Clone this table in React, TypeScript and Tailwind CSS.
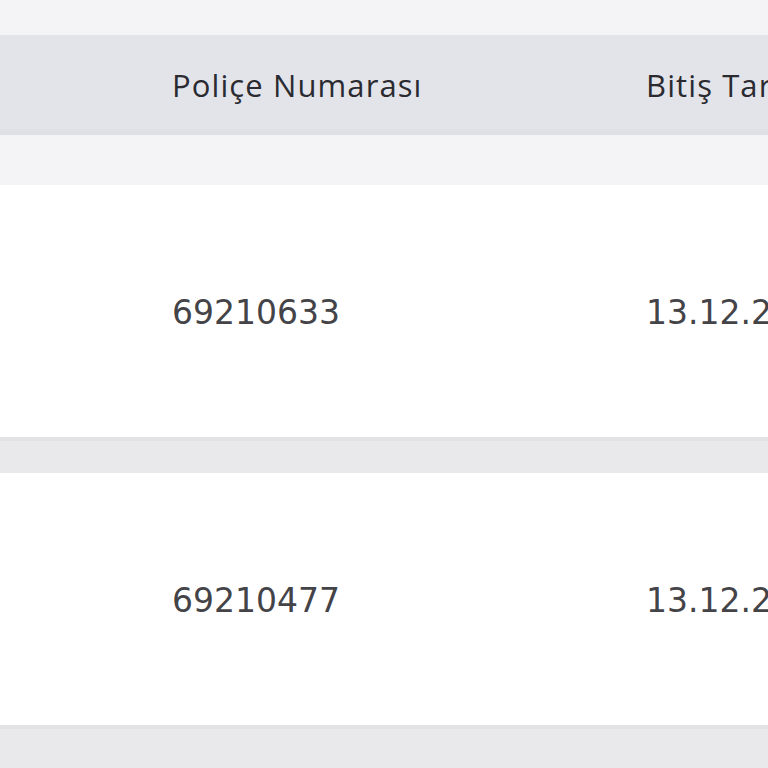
import React from "react";

const rows = [
  { police: "69210633", end: "13.12.2021" },
  { police: "69210477", end: "13.12.2021" },
];

const App: React.FC = () => {
  return (
    <div className="w-[768px] h-[768px] overflow-hidden bg-[#f4f4f7]">
      <div className="h-[35px]" />
      <div className="h-[100px] bg-[#e3e4ea] border-b-[6px] border-[#dfe0e6] flex items-center pt-[6px] whitespace-nowrap text-[#2a2a30] text-[31px] tracking-[1.1px] font-['Open_Sans',sans-serif]">
        <div className="w-[172px] shrink-0" />
        <div className="w-[474px] shrink-0">Poliçe Numarası</div>
        <div className="shrink-0">Bitiş Tarihi</div>
      </div>
      <div className="h-[50px]" />
      {rows.map((row, i) => (
        <div key={row.police}>
          <div className="h-[252px] bg-white flex items-center pt-[4px] whitespace-nowrap text-[#444448] text-[33px] font-['DejaVu_Sans',sans-serif]">
            <div className="w-[172px] shrink-0" />
            <div className="w-[474px] shrink-0">{row.police}</div>
            <div className="shrink-0">{row.end}</div>
          </div>
          <div
            className={
              i === 0
                ? "h-[36px] bg-[#e9e9eb] border-t-[4px] border-[#e2e2e4]"
                : "h-[43px] bg-[#e9e9eb] border-t-[4px] border-[#e2e2e4]"
            }
          />
        </div>
      ))}
    </div>
  );
};

export default App;
